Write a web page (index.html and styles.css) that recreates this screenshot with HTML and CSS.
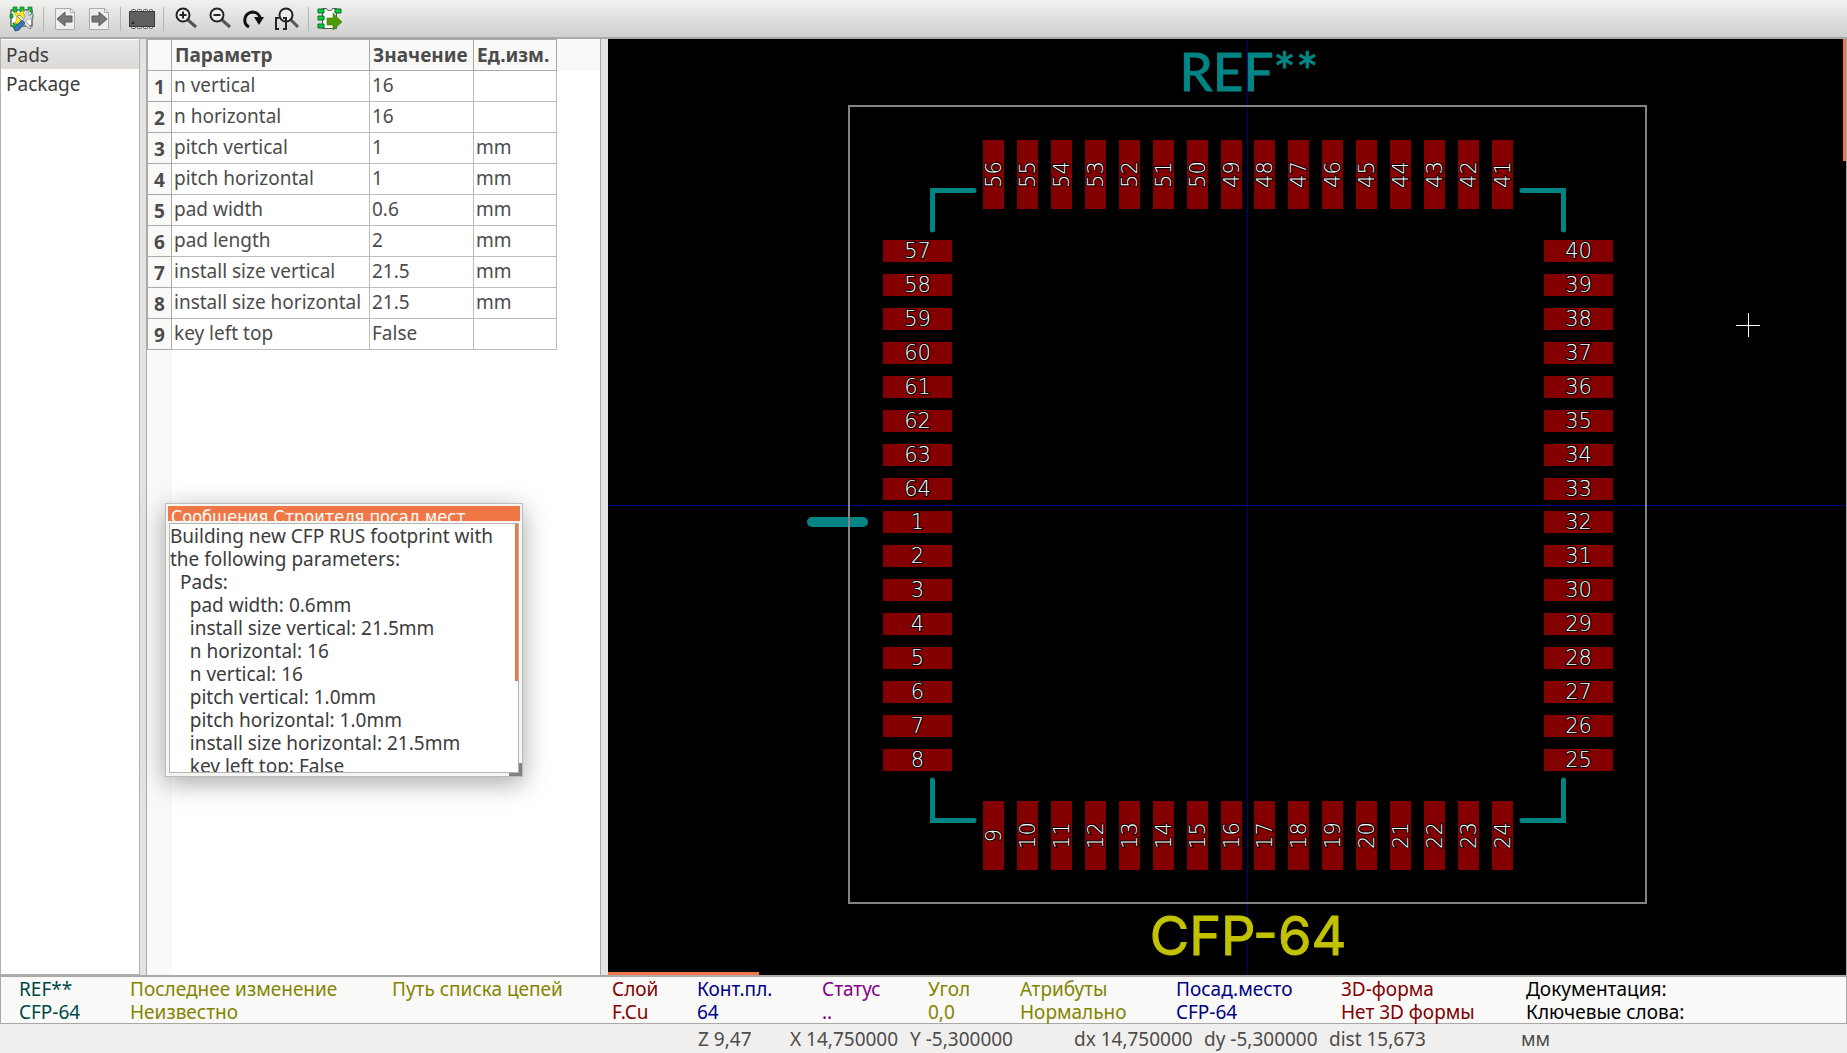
FILE: index.html
```html
<!DOCTYPE html>
<html lang="ru">

<head>
	<meta charset="UTF-8">
	<title>Строитель посадочных мест</title>
	<link rel="stylesheet" href="styles.css">
</head>

<body>
	<header class="toolbar">
		<button type="button" aria-label="Мастер">
			<svg viewBox="0 0 26 26">
				<rect x="2" y="4" width="21" height="16" fill="#fff" stroke="#222"/>
				<g fill="#00c42c" stroke="#173" stroke-width=".7">
					<path d="M4 1h4v5h-4zM11 1h4v5h-4zM19 1h4v5h-4zM4 17h4v5h-4zM1 8h3v4h-3zM21 8h3v4h-3z"/>
				</g>
				<path d="M5 6l5 2 4-4 1 5 6 2-5 2 0 6-4-3-6 2 2-6z" fill="#ffee20" stroke="#c9a400" stroke-width=".7"/>
				<path d="M8 10l11 12 3 1-1-3-10-11z" fill="#e8e8e8" stroke="#777" stroke-width=".8"/>
				<path d="M24 7l-4 3-1-3 3-3-4 1-3 4 1 3-5 5 2 2 6-6 4 0z" fill="#d4d7da" stroke="#888" stroke-width=".6"/>
				<path d="M13 14l3 3-6 7-4 1-1-3z" fill="#3c74b8" stroke="#234f88" stroke-width=".8"/>
			</svg>
		</button>
		<span class="sep"></span>
		<button type="button" aria-label="Назад">
			<svg viewBox="0 0 26 26">
				<path d="M3.500 2.500h15l4 4v17h-19z" fill="#eee" stroke="#aaa"/>
				<path d="M18.500 2.500v4h4z" fill="#fff" stroke="#aaa"/>
				<path d="M5 13l8-7v4h7v6h-7v4z" fill="#777" stroke="#5c5c5c"/>
			</svg>
		</button>
		<button type="button" aria-label="Вперёд">
			<svg viewBox="0 0 26 26">
				<path d="M3.500 2.500h15l4 4v17h-19z" fill="#eee" stroke="#aaa"/>
				<path d="M18.500 2.500v4h4z" fill="#fff" stroke="#aaa"/>
				<path d="M21 13l-8-7v4h-7v6h7v4z" fill="#777" stroke="#5c5c5c"/>
			</svg>
		</button>
		<span class="sep"></span>
		<button type="button" aria-label="Посадочное место">
			<svg viewBox="0 0 26 26">
				<g fill="#eee" stroke="#555">
					<rect x="2.500" y="3.500" width="4" height="19" rx="1"/>
					<rect x="8.500" y="3.500" width="4" height="19" rx="1"/>
					<rect x="14.500" y="3.500" width="4" height="19" rx="1"/>
					<rect x="20.500" y="3.500" width="3" height="19" rx="1"/>
				</g>
				<rect x=".5" y="5.500" width="25" height="15" fill="#606060" stroke="#3a3a3a"/>
				<circle cx="4" cy="17" r="1.300" fill="#222"/>
			</svg>
		</button>
		<span class="sep"></span>
		<button type="button" aria-label="Увеличить">
			<svg viewBox="0 0 26 26" fill="none" stroke="#222">
				<path d="M16 14l8 7" stroke="#555" stroke-width="3"/>
				<circle cx="11" cy="9" r="6.500" fill="#eee" stroke-width="2"/>
				<path d="M7.500 9h7M11 5.500v7" stroke-width="2"/>
			</svg>
		</button>
		<button type="button" aria-label="Уменьшить">
			<svg viewBox="0 0 26 26" fill="none" stroke="#222">
				<path d="M16 14l8 7" stroke="#555" stroke-width="3"/>
				<circle cx="11" cy="9" r="6.500" fill="#eee" stroke-width="2"/>
				<path d="M7.500 9h7" stroke-width="2"/>
			</svg>
		</button>
		<button type="button" aria-label="Обновить">
			<svg viewBox="0 0 26 26">
				<path d="M9 21c-6-3-6-13 3-15 5 0 8 3 8 7" fill="none" stroke="#111" stroke-width="3"/>
				<path d="M14 11l10 0-5 8z" fill="#111"/>
			</svg>
		</button>
		<button type="button" aria-label="Показать всё">
			<svg viewBox="0 0 26 26" fill="none" stroke="#222">
				<path d="M17 14l7 7" stroke="#555" stroke-width="3"/>
				<circle cx="12" cy="9" r="6.500" fill="#eee" stroke-width="2"/>
				<path d="M5 12h-3v11h3M9 12h3v11h-3" stroke-width="2"/>
			</svg>
		</button>
		<span class="sep"></span>
		<button type="button" aria-label="Экспорт в редактор">
			<svg viewBox="0 0 26 26">
				<path d="M5.500 2.500h4a3 2 0 0 0 6 0h4v20h-14z" fill="#fff" stroke="#555"/>
				<g fill="#00d42c" stroke="#163" stroke-width="1">
					<path d="M1 3h6v4h-6zM1 10h6v4h-6zM1 18h6v4h-6zM18 3h6v4h-6z"/>
				</g>
				<path d="M10 12h6v-5l9 9-9 8v-5h-6z" fill="#4e9a06" stroke="#3c7a04" stroke-width=".6"/>
			</svg>
		</button>
	</header>

	<main class="workspace">
		<ul class="pages">
			<li><button type="button" class="selected">Pads</button></li>
			<li><button type="button">Package</button></li>
		</ul>
		<div class="splitter"></div>

		<section class="params">
			<table>
				<colgroup>
					<col class="col_num"><col class="col_name"><col class="col_value"><col class="col_unit">
				</colgroup>
				<thead>
					<tr><th></th><th>Параметр</th><th>Значение</th><th>Ед.изм.</th></tr>
				</thead>
				<tbody>
					<tr><th>1</th><td>n vertical</td><td>16</td><td></td></tr>
					<tr><th>2</th><td>n horizontal</td><td>16</td><td></td></tr>
					<tr><th>3</th><td>pitch vertical</td><td>1</td><td>mm</td></tr>
					<tr><th>4</th><td>pitch horizontal</td><td>1</td><td>mm</td></tr>
					<tr><th>5</th><td>pad width</td><td>0.6</td><td>mm</td></tr>
					<tr><th>6</th><td>pad length</td><td>2</td><td>mm</td></tr>
					<tr><th>7</th><td>install size vertical</td><td>21.5</td><td>mm</td></tr>
					<tr><th>8</th><td>install size horizontal</td><td>21.5</td><td>mm</td></tr>
					<tr><th>9</th><td>key left top</td><td>False</td><td></td></tr>
				</tbody>
			</table>
		</section>
		<div class="splitter wide"></div>

		<section class="canvas">
			<svg viewBox="0 0 1238 936">
				<path class="axis" d="M639.500 1V936M0 466.500H1238"/>
				<g class="silk">
					<path d="M324.500 191V151.500H366M914 151.500H955.500V191M324.500 741V781.500H366M914 781.500H955.500V741"/>
					<path class="key" d="M204 483H255"/>
				</g>
				<rect class="courtyard" x="241" y="67" width="797" height="797"/>
				<g id="pads"></g>
				<text class="ref" x="641" y="52">REF**</text>
				<text class="value" x="640" y="916">CFP-64</text>
				<path class="cursor" d="M1128 286.500h24M1140.500 274v24"/>
			</svg>
			<span class="vscroll"></span>
			<span class="hscroll"></span>
		</section>

		<aside class="messages">
			<label for="log">Сообщения Строителя посад.мест</label>
			<div class="log_frame">
				<textarea id="log" readonly>Building new CFP RUS footprint with the following parameters:
  Pads:
    pad width: 0.6mm
    install size vertical: 21.5mm
    n horizontal: 16
    n vertical: 16
    pitch vertical: 1.0mm
    pitch horizontal: 1.0mm
    install size horizontal: 21.5mm
    key left top: False</textarea>
				<span class="thumb"></span>
			</div>
		</aside>
	</main>

	<section class="info">
		<p class="teal">REF**<br>CFP-64</p>
		<p class="olive">Последнее изменение<br>Неизвестно</p>
		<p class="olive">Путь списка цепей</p>
		<p class="red">Слой<br>F.Cu</p>
		<p class="blue">Конт.пл.<br>64</p>
		<p class="purple">Статус<br>..</p>
		<p class="olive">Угол<br>0,0</p>
		<p class="olive">Атрибуты<br>Нормально</p>
		<p class="blue">Посад.место<br>CFP-64</p>
		<p class="red">3D-форма<br>Нет 3D формы</p>
		<p>Документация:<br>Ключевые слова:</p>
	</section>

	<footer class="status">
		<span></span>
		<span>Z 9,47</span>
		<span>X 14,750000</span>
		<span>Y -5,300000</span>
		<span>dx 14,750000</span>
		<span>dy -5,300000</span>
		<span>dist 15,673</span>
		<span>мм</span>
	</footer>

	<script>
		// 16 pads on each side, numbered counter-clockwise from the key
		const STEP = 509 / 15;
		const svgPads = document.getElementById('pads');

		function addPad(num, x, y, w, h) {
			const cx = x + w / 2;
			const cy = y + h / 2;
			const turn = h > w ? ` transform="rotate(-90 ${cx} ${cy})"` : '';
			svgPads.innerHTML += `<rect x="${x}" y="${y}" width="${w}" height="${h}"/>` +
				`<text x="${cx}" y="${cy + 7}"${turn}>${num}</text>`;
		}

		for (let i = 0; i < 16; i++) {
			const pos = Math.round(STEP * i);
			addPad(i < 8 ? 57 + i : i - 7, 275, 201 + pos, 69, 22);
			addPad(9 + i, 375 + pos, 762, 21, 69);
			addPad(40 - i, 936, 201 + pos, 69, 22);
			addPad(56 - i, 375 + pos, 101, 21, 69);
		}
	</script>
</body>

</html>
```
FILE: styles.css
```css
* {
	box-sizing: border-box;
}

body {
	margin: 0;
	height: 100vh;
	display: flex;
	flex-direction: column;
	font: 19px/23px "Noto Sans", sans-serif;
	color: #4c4c4c;
	background: #f1efed;
	overflow: hidden;
}

button {
	border: none;
	background: none;
	padding: 0;
	font: inherit;
	color: inherit;
}

/* toolbar */
.toolbar {
	display: flex;
	align-items: center;
	height: 39px;
	padding-left: 5px;
	background: linear-gradient(#f1f1ef, #cfcfcd);
	border-bottom: 2px solid #a9a9a7;
}

.toolbar button {
	width: 34px;
	height: 34px;
	display: flex;
	align-items: center;
	justify-content: center;
}

.toolbar svg {
	width: 26px;
	height: 26px;
}

.sep {
	width: 1px;
	height: 24px;
	margin: 0 4px;
	background: #b4b4b2;
}

/* panes */
.workspace {
	flex: 1;
	min-height: 0;
	display: flex;
	position: relative;
}

.pages {
	width: 140px;
	margin: 0;
	padding: 1px 0 0;
	list-style: none;
	background: #fff;
	border: 1px solid #b0b0ae;
	border-top: none;
	color: #3c3c3c;
}

.pages button {
	display: block;
	width: 100%;
	padding: 4px 5px 2px;
	text-align: left;
}

.pages .selected {
	background: linear-gradient(#e9e8e6, #dcd9d7);
}

.splitter {
	width: 6px;
	background: #e3e3e1;
}

.splitter.wide {
	width: 7px;
}

.params {
	width: 455px;
	border: 1px solid #a9a9a7;
	border-width: 0 1px;
	background: linear-gradient(#f9f9f8, #f9f9f8) 0 0 / 100% 32px no-repeat,
		linear-gradient(to right, #f9f9f8 25px, #fff 25px);
}

table {
	table-layout: fixed;
	width: 410px;
	border-spacing: 0;
	border: 1px solid #a9a9a7;
	border-width: 1px 0 0 1px;
}

.col_num { width: 24px; }
.col_name { width: 198px; }
.col_value { width: 104px; }
.col_unit { width: 83px; }

th,
td {
	height: 31px;
	padding: 0 3px;
	border: 1px solid #bcbcba;
	border-width: 0 1px 1px 0;
	text-align: left;
	white-space: nowrap;
}

td {
	padding: 0 2px 2px;
	background: #fff;
}

th {
	border-color: #a9a9a7;
	background: #f9f9f8;
}

tbody th {
	text-align: center;
	padding: 2px 0 0;
}

/* footprint view */
.canvas {
	flex: 1;
	min-width: 0;
	position: relative;
	background: #000;
	border-right: 1px solid #a9a9a7;
}

.canvas svg {
	display: block;
	width: 100%;
	height: 100%;
}

.axis {
	stroke: #000084;
}

.silk {
	fill: none;
	stroke: #008484;
	stroke-width: 5;
	stroke-linecap: round;
}

.key {
	stroke-width: 10;
}

.courtyard {
	fill: none;
	stroke: #848484;
	stroke-width: 2;
}

#pads rect {
	fill: #840000;
}

#pads text {
	font: 200 21px "DejaVu Sans", sans-serif;
	text-anchor: middle;
	fill: #fff;
	stroke: #000;
	stroke-width: 2;
	paint-order: stroke;
}

.ref,
.value {
	text-anchor: middle;
	stroke-width: 1;
	stroke-linejoin: round;
}

.ref {
	font: 53px Lato, sans-serif;
	fill: #008484;
	stroke: #008484;
}

.value {
	font: 54px Inter, sans-serif;
	fill: #c2c200;
	stroke: #c2c200;
}

.cursor {
	stroke: #fff;
}

.vscroll,
.hscroll,
.thumb {
	position: absolute;
	background: #f07746;
}

.vscroll {
	top: 0;
	right: 0;
	width: 3px;
	height: 13%;
}

.hscroll {
	left: 0;
	bottom: 0;
	width: 151px;
	height: 3px;
}

/* floating message window */
.messages {
	position: absolute;
	left: 165px;
	top: 464px;
	width: 358px;
	padding: 2px;
	border: 1px solid #bcbcba;
	background: linear-gradient(#808080, #808080) 100% 100% / 13px 13px no-repeat #f5f5f3;
	box-shadow: 0 6px 24px rgba(0, 0, 0, .35);
}

.messages label {
	display: block;
	height: 15px;
	padding-left: 3px;
	overflow: hidden;
	font: 18px/22px "DejaVu Sans Condensed", "DejaVu Sans", sans-serif;
	color: #fff;
	background: #f07746;
}

.log_frame {
	position: relative;
	height: 250px;
	margin: 2px 1px 1px;
	border: 1px solid #b4b4b2;
	background: #fff;
}

.log_frame textarea {
	display: block;
	width: 100%;
	height: 100%;
	padding: 1px 4px 0 0;
	border: none;
	resize: none;
	overflow: hidden;
	font: inherit;
	color: #3c3c3c;
	background: none;
}

.thumb {
	top: 0;
	right: 0;
	width: 3px;
	height: 157px;
}

/* bottom panels */
.info {
	display: grid;
	grid-template-columns: 111px 262px 220px 85px 125px 106px 92px 156px 165px 185px 1fr;
	height: 49px;
	padding: 1px 0 0 18px;
	border: 1px solid #a9a9a7;
	border-top-width: 2px;
	background: #f9f9f8;
	color: #000;
	white-space: nowrap;
}

.info p {
	margin: 0;
}

.teal { color: #004848; }
.olive { color: #848400; }
.red { color: #840000; }
.blue { color: #000084; }
.purple { color: #840084; }

.status {
	display: grid;
	grid-template-columns: 698px 92px 120px 164px 130px 125px 192px 1fr;
	height: 29px;
	padding-top: 4px;
	white-space: nowrap;
}
```
